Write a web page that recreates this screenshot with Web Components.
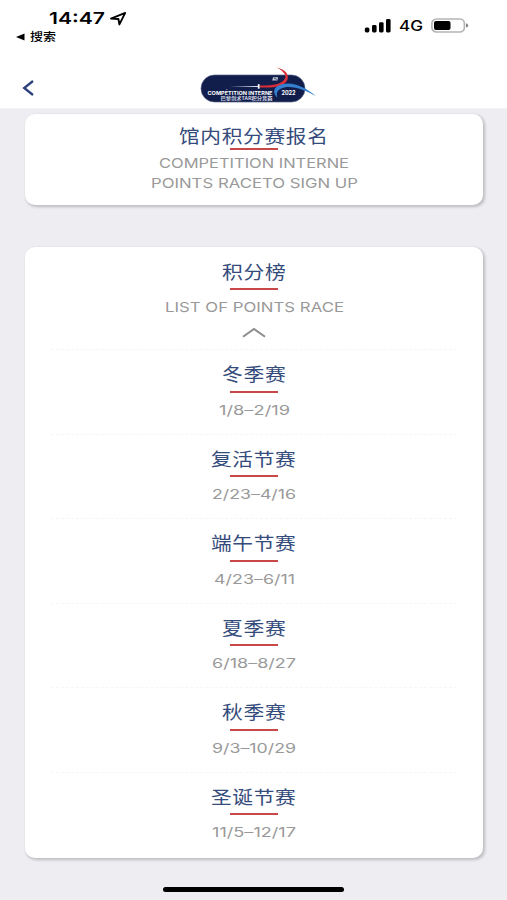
<!DOCTYPE html>
<html lang="zh-CN">
<head>
<meta charset="utf-8">
<meta name="viewport" content="width=device-width">
<title>馆内积分赛</title>
<style>
html,body{margin:0;height:100%}
body{background:#ededf2;font-family:"Liberation Sans","Noto Sans CJK SC",sans-serif;overflow:hidden}
</style>
</head>
<body>
<points-app></points-app>
<script>
const shadow = (el, html) => { el.attachShadow({mode:'open'}).innerHTML = html; return el.shadowRoot; };

// One line of text stretched horizontally to the width in its "w" attribute.
customElements.define('fit-text', class extends HTMLElement {
  connectedCallback() {
    if (this.shadowRoot) return;
    const root = shadow(this, `<style>
      :host{display:block;flex:none;white-space:nowrap}
      span{display:inline-block;transform-origin:0 50%}
    </style><span></span>`);
    const span = root.querySelector('span'), w = +this.getAttribute('w');
    span.textContent = this.getAttribute('text');
    this.style.width = w + 'px';
    span.style.transform = `scaleX(${w / span.getBoundingClientRect().width})`;
  }
});

customElements.define('status-bar', class extends HTMLElement {
  connectedCallback() {
    shadow(this, `<style>
      :host{display:flex;justify-content:space-between;height:50px;color:#000}
      .left{padding:9px 0 0 16px}
      .time{display:flex;align-items:center;gap:5px;padding-left:33px;height:19px}
      .time fit-text{font:600 16.5px/19px Inter,sans-serif}
      .back{display:flex;align-items:center;gap:5px;height:17px}
      .back fit-text{font:500 11.5px/17px "Noto Sans CJK SC",sans-serif}
      .right{display:flex;align-items:center;height:20px;padding:16px 38px 0 0}
      .right fit-text{font:500 14px/20px Inter,sans-serif;margin:0 8px 0 8px}
      svg{display:block}
    </style>
    <div class="left">
      <div class="time"><fit-text w="56" text="14:47"></fit-text>
        <svg width="18" height="15" viewBox="0 0 18 15"><path d="M1 7.6 15.2 1.9 9.4 13.4 8.4 8Z" fill="none" stroke="#000" stroke-width="1.9" stroke-linejoin="round"/></svg></div>
      <div class="back"><svg width="9" height="8" viewBox="0 0 9 8"><path d="M0 4 8.5.4V7.6Z"/></svg><fit-text w="26" text="搜索"></fit-text></div>
    </div>
    <div class="right">
      <svg width="27" height="14" viewBox="0 0 27 14"><rect x="0.8" y="8.4" width="4.6" height="5" rx="1.6"/><rect x="8" y="6" width="4.6" height="7.4" rx="1.4"/><rect x="15" y="3.2" width="4.6" height="10.2" rx="1.4"/><rect x="22" y="0" width="4.6" height="13.4" rx="1.4"/></svg>
      <fit-text w="24" text="4G"></fit-text>
      <svg width="38" height="16" viewBox="0 0 38 16"><rect x=".9" y="1" width="32.5" height="13" rx="4.4" fill="#fff" stroke="#b5b5b5" stroke-width="1.7"/><rect x="3" y="3" width="16.5" height="9" rx="2" /><path d="M35 5.2q2.2.5 2.2 2.2t-2.2 2.2Z" fill="#888"/></svg>
    </div>`);
  }
});

customElements.define('event-logo', class extends HTMLElement {
  connectedCallback() {
    shadow(this, `<style>:host{display:block}svg{display:block;overflow:visible}</style>
    <svg width="116" height="38" viewBox="200 66 116 38">
      <rect x="201" y="75" width="104" height="27" rx="13.5" fill="#111e4b" stroke="#596387" stroke-width=".7"/>
      <path d="M229 86.5 258 85.9V87Z" fill="#d9dcea"/><path d="M257.8 84.2h1.8v4.5h-1.8z" fill="#fff"/>
      <path d="M260 85.6C273 85.7 283 84.5 285.3 77.5 286.1 74 282 70 276 67.2 285 69.3 289.2 74 287.6 79.2 285 86.5 274 88.2 260 87.4Z" fill="#d92e37"/>
      <path d="M277.5 98C271.8 92 273.5 86.5 282 84.2 294 81.4 306 88 316 96 305 90 294 85.5 284.2 87.4 276.7 89.4 275.9 93 277.5 98Z" fill="#347fd0"/>
      <path d="M273 77.2h5.2l-.8 3.2h-5.2z" fill="#bfc4d5"/><path d="M274 78.2l2.8 1.2" stroke="#111e4b" stroke-width=".7"/>
      <g fill="#fff" font-weight="700"><text x="207.5" y="94.8" font-family="Inter" font-size="5" textLength="65" lengthAdjust="spacingAndGlyphs">COMPÉTITION INTERNE</text>
      <text x="220.5" y="99.6" fill="#d5d8e4" font-family="Noto Sans CJK SC" font-size="4.3" textLength="52" lengthAdjust="spacingAndGlyphs">巴黎剑术TAR积分竞赛</text>
      <text x="281.5" y="95.1" font-family="Inter" font-size="5.6" textLength="14" lengthAdjust="spacingAndGlyphs">2022</text></g>
    </svg>`);
  }
});

customElements.define('nav-bar', class extends HTMLElement {
  connectedCallback() {
    shadow(this, `<style>
      :host{display:grid;grid-template-columns:200px 1fr;height:58px;border-bottom:1px solid #f3f3f4;align-items:start}
      .chev{margin:30px 0 0 22px;display:block}
      event-logo{margin-top:16px}
    </style>
    <svg class="chev" width="14" height="16" viewBox="0 0 14 16"><path d="M11 1 2.2 8 11 15" fill="none" stroke="#2c417c" stroke-width="2.3"/></svg>
    <event-logo></event-logo>`);
  }
});

// Title, red rule, and whatever caption lines are slotted in.
customElements.define('race-heading', class extends HTMLElement {
  connectedCallback() {
    shadow(this, `<style>
      :host{display:flex;flex-direction:column;align-items:center;color:#999;font:400 13.5px/20.5px Inter,sans-serif}
      .t{font:400 18px/24px "Noto Sans CJK SC",sans-serif;color:#344b7b;letter-spacing:.6px}
      i{display:block;width:47.5px;height:2.2px;background:#c8484a;margin:var(--rule-gap,5.3px) 0 var(--cap-gap,6.8px)}
    </style>
    <fit-text class="t" w="${this.getAttribute('w')}" text="${this.getAttribute('label')}"></fit-text><i></i><slot></slot>`);
  }
});

customElements.define('race-row', class extends HTMLElement {
  connectedCallback() {
    const a = n => this.getAttribute(n);
    shadow(this, `<style>
      :host{display:block;box-sizing:border-box;height:84.5px;margin:0 26px;padding-top:11px;border-top:1px dashed #f6f6f6}
    </style><race-heading label="${a('label')}" w="${a('w')}"><fit-text w="${a('dw')}" text="${a('date')}"></fit-text></race-heading>`);
  }
});

customElements.define('info-card', class extends HTMLElement {
  connectedCallback() {
    shadow(this, `<style>
      :host{display:block;box-sizing:border-box;margin:0 24px 0 25px;background:#fff;border-radius:10px;box-shadow:1.5px 1.5px 3px rgba(0,0,0,.2)}
    </style><slot></slot>`);
  }
});

customElements.define('points-app', class extends HTMLElement {
  connectedCallback() {
    shadow(this, `<style>
      :host{display:flex;flex-direction:column;height:900px;width:507px}
      header{background:#fff;height:109px;flex:none}
      .signup{height:91px;margin-top:5px;padding-top:8.5px;flex:none}
      .signup race-heading{--rule-gap:1.7px;--cap-gap:2.4px}
      .list{height:611px;margin-top:42px;padding-top:11.5px;flex:none}
      .list>race-heading{--cap-gap:7.2px}
      .chev{display:block;margin:9.8px auto 11px}
      .home{width:181px;height:5px;border-radius:3px;background:#000;margin:29px auto 0}
    </style>
    <header><status-bar></status-bar><nav-bar></nav-bar></header>
    <info-card class="signup"><race-heading label="馆内积分赛报名" w="149.5"><fit-text w="190" text="COMPETITION INTERNE"></fit-text><fit-text w="207" text="POINTS RACETO SIGN UP"></fit-text></race-heading></info-card>
    <info-card class="list">
      <race-heading label="积分榜" w="64.5"><fit-text w="179" text="LIST OF POINTS RACE"></fit-text></race-heading>
      <svg class="chev" width="24" height="11" viewBox="0 0 24 11"><path d="M1 9.7 12 2 23 9.7" fill="none" stroke="#8c8c8c" stroke-width="2"/></svg>
      <race-row label="冬季赛" w="64.5" date="1/8–2/19" dw="71"></race-row>
      <race-row label="复活节赛" w="85.5" date="2/23–4/16" dw="84"></race-row>
      <race-row label="端午节赛" w="85.5" date="4/23–6/11" dw="81"></race-row>
      <race-row label="夏季赛" w="64.5" date="6/18–8/27" dw="84"></race-row>
      <race-row label="秋季赛" w="64.5" date="9/3–10/29" dw="84"></race-row>
      <race-row label="圣诞节赛" w="85.5" date="11/5–12/17" dw="84"></race-row>
    </info-card>
    <div class="home"></div>`);
  }
});
</script>
</body>
</html>
